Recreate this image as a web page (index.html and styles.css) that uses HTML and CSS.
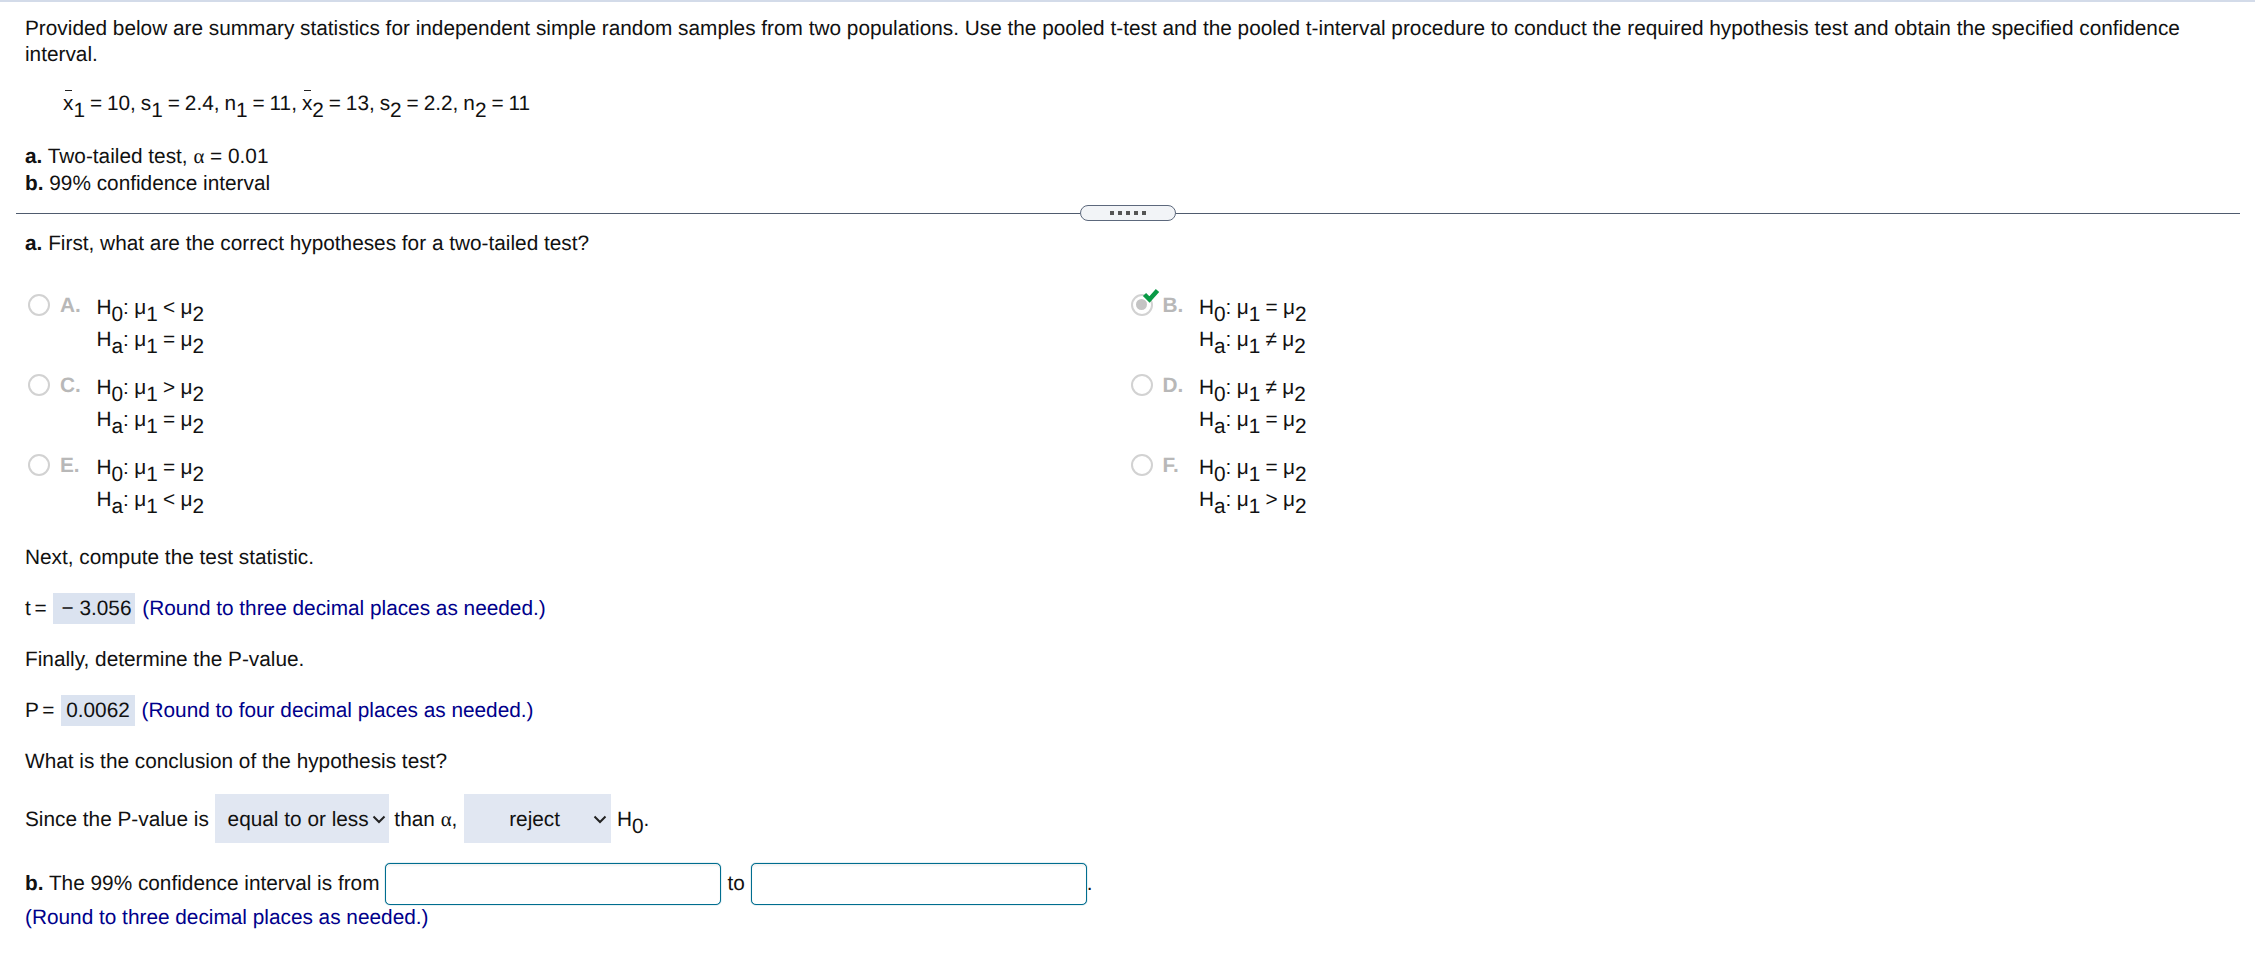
FILE: index.html
```html
<!DOCTYPE html>
<html lang="en">
<head>
<meta charset="utf-8">
<title>Pooled t-test</title>
<link rel="stylesheet" href="styles.css">
</head>
<body>
<main class="page">
  <section class="stem">
    <p class="intro">Provided below are summary statistics for independent simple random samples from two populations. Use the pooled t-test and the pooled t-interval procedure to conduct the required hypothesis test and obtain the specified confidence interval.</p>
    <p class="formula"><span class="xbar">x</span><sub>1</sub> = 10, s<sub>1</sub> = 2.4, n<sub>1</sub> = 11, <span class="xbar">x</span><sub>2</sub> = 13, s<sub>2</sub> = 2.2, n<sub>2</sub> = 11</p>
    <p class="parts"><b>a.</b> Two-tailed test, <span class="greek">α</span> = 0.01<br><b>b.</b> 99% confidence interval</p>
  </section>

  <div class="divider">
    <span class="rule"></span>
    <span class="pill"><i></i><i></i><i></i><i></i><i></i></span>
    <span class="rule"></span>
  </div>

  <section class="work">
    <p class="question"><b>a.</b> First, what are the correct hypotheses for a two-tailed test?</p>

    <div class="options">
      <div class="option"><span class="radio"></span><span class="letter">A.</span>
        <div class="hyp"><div>H<sub>0</sub>: <span class="mu">μ</span><sub>1</sub> &lt; <span class="mu">μ</span><sub>2</sub></div><div>H<sub>a</sub>: <span class="mu">μ</span><sub>1</sub> = <span class="mu">μ</span><sub>2</sub></div></div></div>
      <div class="option"><span class="radio picked"><svg class="check" viewBox="0 0 18 15" width="18" height="15"><path d="M2.5 6.5 L7.5 11.5 L15.5 2.5" fill="none" stroke="#0a9a46" stroke-width="4.5"/></svg></span><span class="letter">B.</span>
        <div class="hyp"><div>H<sub>0</sub>: <span class="mu">μ</span><sub>1</sub> = <span class="mu">μ</span><sub>2</sub></div><div>H<sub>a</sub>: <span class="mu">μ</span><sub>1</sub> ≠ <span class="mu">μ</span><sub>2</sub></div></div></div>
      <div class="option"><span class="radio"></span><span class="letter">C.</span>
        <div class="hyp"><div>H<sub>0</sub>: <span class="mu">μ</span><sub>1</sub> &gt; <span class="mu">μ</span><sub>2</sub></div><div>H<sub>a</sub>: <span class="mu">μ</span><sub>1</sub> = <span class="mu">μ</span><sub>2</sub></div></div></div>
      <div class="option"><span class="radio"></span><span class="letter">D.</span>
        <div class="hyp"><div>H<sub>0</sub>: <span class="mu">μ</span><sub>1</sub> ≠ <span class="mu">μ</span><sub>2</sub></div><div>H<sub>a</sub>: <span class="mu">μ</span><sub>1</sub> = <span class="mu">μ</span><sub>2</sub></div></div></div>
      <div class="option"><span class="radio"></span><span class="letter">E.</span>
        <div class="hyp"><div>H<sub>0</sub>: <span class="mu">μ</span><sub>1</sub> = <span class="mu">μ</span><sub>2</sub></div><div>H<sub>a</sub>: <span class="mu">μ</span><sub>1</sub> &lt; <span class="mu">μ</span><sub>2</sub></div></div></div>
      <div class="option"><span class="radio"></span><span class="letter">F.</span>
        <div class="hyp"><div>H<sub>0</sub>: <span class="mu">μ</span><sub>1</sub> = <span class="mu">μ</span><sub>2</sub></div><div>H<sub>a</sub>: <span class="mu">μ</span><sub>1</sub> &gt; <span class="mu">μ</span><sub>2</sub></div></div></div>
    </div>

    <p class="line next">Next, compute the test statistic.</p>
    <p class="line answer"><span class="lbl">t =</span> <span class="filled tstat">− 3.056</span> <span class="hint">(Round to three decimal places as needed.)</span></p>
    <p class="line step">Finally, determine the P-value.</p>
    <p class="line answer"><span class="lbl">P =</span> <span class="filled pval">0.0062</span> <span class="hint">(Round to four decimal places as needed.)</span></p>
    <p class="line step">What is the conclusion of the hypothesis test?</p>
    <p class="line conclusion">Since the P-value is
      <span class="select first">equal to or less<svg class="chev" viewBox="0 0 14 9" width="14" height="9"><path d="M1.5 1.5 L7 7 L12.5 1.5" fill="none" stroke="#222" stroke-width="2"/></svg></span>
      than <span class="greek">α</span>,
      <span class="select second"><span class="choice">reject</span><svg class="chev" viewBox="0 0 14 9" width="14" height="9"><path d="M1.5 1.5 L7 7 L12.5 1.5" fill="none" stroke="#222" stroke-width="2"/></svg></span>
      H<sub>0</sub>.</p>
    <p class="line interval"><span><b>b.</b> The 99% confidence interval is from</span> <input class="box" type="text" aria-label="lower bound"> <span>to</span> <input class="box" type="text" aria-label="upper bound"><span>.</span></p>
    <p class="hint last">(Round to three decimal places as needed.)</p>
  </section>
</main>
</body>
</html>
```
FILE: styles.css
```css
* { box-sizing: border-box; }
html, body { margin: 0; padding: 0; background: #fff; }
body {
  font-family: "Liberation Sans", Arial, sans-serif;
  font-size: 20.8px;
  line-height: 26px;
  color: #111;
  overflow: hidden;
  text-rendering: geometricPrecision;
}
p { margin: 0; }
.page { border-top: 2px solid #d3dbe9; height: 958px; }
.stem { padding: 14px 25px 0; }
.formula { margin-top: 23px; padding-left: 38px; word-spacing: -0.85px; }
.parts { margin-top: 26px; line-height: 27px; }
sub { font-size: 20.8px; line-height: 0; vertical-align: -7px; }
.xbar { position: relative; display: inline-block; }
.xbar::before {
  content: "";
  position: absolute;
  left: 2px; right: 1px; top: -1px;
  height: 1px;
  background: #222;
}
.greek { font-family: "Liberation Serif", serif; }

.divider { display: flex; align-items: center; margin: 8px 15px 0 16px; height: 16px; }
.rule { flex: 1; height: 1px; background: #4f5b6e; }
.pill {
  width: 96px; height: 16px;
  border: 1px solid #5c687c; border-radius: 8px;
  background: #f2f4f7;
  display: flex; align-items: center; justify-content: center; gap: 4px;
}
.pill i { width: 4px; height: 4px; background: #555; display: block; }

.work { padding: 0 25px; }
.question { margin-top: 10px; }
.options { display: grid; grid-template-columns: 1fr 1fr; row-gap: 14px; margin-top: 33px; }
.option { display: flex; align-items: flex-start; }
.radio {
  position: relative;
  width: 22px; height: 22px; margin: 4px 0 0 3px;
  border: 2.5px solid #d2d2d2; border-radius: 50%;
  flex: none;
}
.radio.picked::before {
  content: "";
  position: absolute; left: 3px; top: 3px;
  width: 11px; height: 11px;
  border-radius: 50%; background: #c4c4c4;
}
.check { position: absolute; left: 9px; top: -8px; }
.letter { width: 36.5px; margin: 3px 0 0 10px; font-weight: bold; color: #b8b8b8; }
.hyp { margin-top: 2px; line-height: 32px; word-spacing: -0.5px; }
.hyp sub { vertical-align: -7px; }
.mu { font-family: "Liberation Sans", sans-serif; }

.next { margin-top: 29px; }
.answer { margin-top: 22px; display: block; line-height: 32px; }
.lbl { word-spacing: -2px; }
.step { margin-top: 22px; }
.filled { display: inline-block; height: 31px; background: #dbe3f0; line-height: 31px; margin: 0 1px; }
.tstat { padding: 0 4px 0 8px; }
.pval { padding: 0 5px; }
.hint { color: #00008b; }

.conclusion { margin-top: 19px; line-height: 52px; height: 48px; }
.select {
  display: inline-flex; align-items: center; justify-content: space-between;
  height: 49px; padding-top: 2px; background: #e1e7f2; vertical-align: top; margin: 0;
}
.select.first { width: 174px; padding-left: 13px; padding-right: 3px; }
.select.second { width: 147px; margin-left: 1px; padding-left: 12px; padding-right: 4px; }
.choice { flex: 1; text-align: center; }
.interval { margin-top: 21px; display: flex; align-items: center; gap: 6px; white-space: pre; }
.box {
  width: 336px; height: 42px;
  border: 1px solid #006d8f; border-radius: 5px;
  box-shadow: 0 0 1px #006d8f, inset 0 2px 2px rgba(0,0,0,.05);
  background: #fff; padding: 0; margin: 0;
}
.interval .box:last-of-type { margin-right: -6px; }
.last { margin-top: 0; }
```
